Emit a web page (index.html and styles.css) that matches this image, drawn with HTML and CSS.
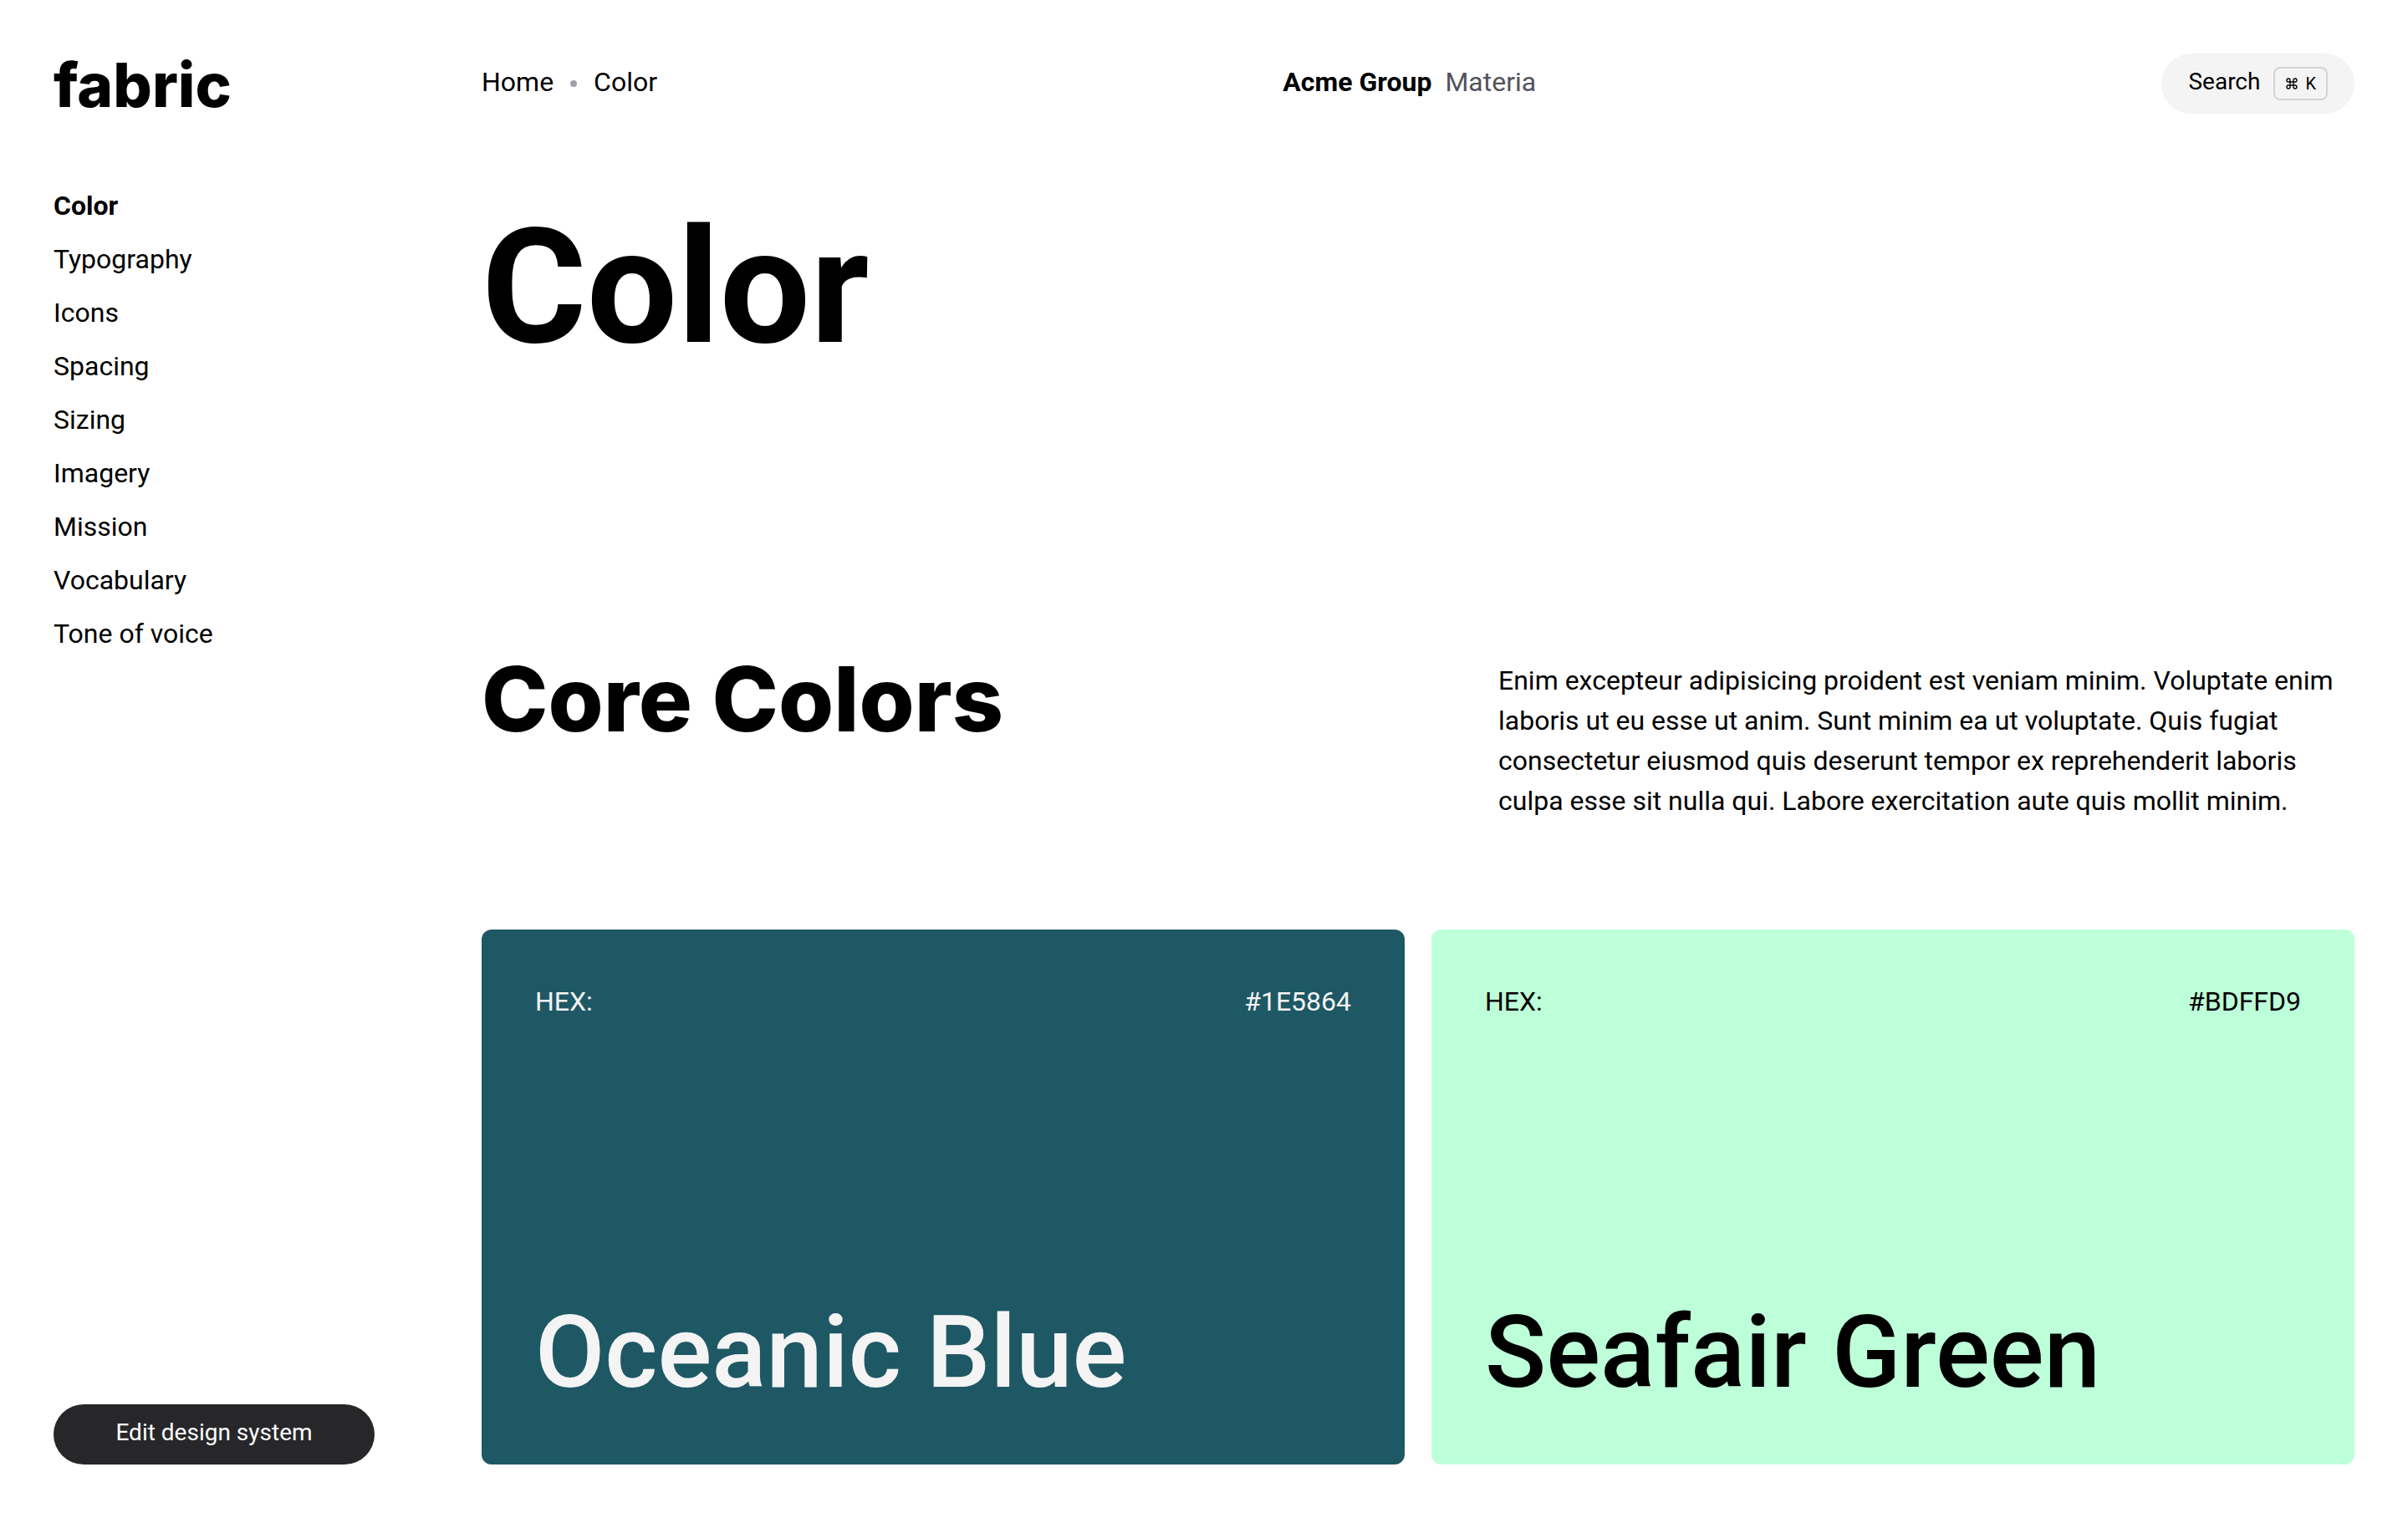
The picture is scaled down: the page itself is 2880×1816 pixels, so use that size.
FILE: index.html
```html
<!DOCTYPE html>
<html lang="en">
<head>
  <meta charset="utf-8">
  <meta name="viewport" content="width=device-width, initial-scale=1">
  <title>Color – Fabric</title>
  <link rel="stylesheet" href="styles.css">
</head>
<body>
  <div class="layout">
    <aside class="sidebar">
      <a class="logo" href="#">fabric</a>
      <nav class="nav" aria-label="Sections">
        <a class="nav-link nav-link-active" href="#" aria-current="page">Color</a>
        <a class="nav-link" href="#">Typography</a>
        <a class="nav-link" href="#">Icons</a>
        <a class="nav-link" href="#">Spacing</a>
        <a class="nav-link" href="#">Sizing</a>
        <a class="nav-link" href="#">Imagery</a>
        <a class="nav-link" href="#">Mission</a>
        <a class="nav-link" href="#">Vocabulary</a>
        <a class="nav-link" href="#">Tone of voice</a>
      </nav>
      <button class="edit-button" type="button">Edit design system</button>
    </aside>

    <main class="main">
      <header class="topbar">
        <nav class="breadcrumb" aria-label="Breadcrumb">
          <a href="#">Home</a>
          <span class="dot"></span>
          <a href="#">Color</a>
        </nav>
        <div class="workspace">
          <strong>Acme Group</strong>
          <span class="project">Materia</span>
        </div>
        <button class="search" type="button">
          <span class="search-label">Search</span>
          <kbd class="shortcut">
            <svg class="command-icon" viewBox="0 0 24 24" aria-hidden="true"><path d="M15 6v12a3 3 0 1 0 3-3H6a3 3 0 1 0 3 3V6a3 3 0 1 0-3 3h12a3 3 0 1 0-3-3"/></svg>
            <span>K</span>
          </kbd>
        </button>
      </header>

      <h1 class="page-title">Color</h1>

      <section class="section">
        <div class="section-head">
          <h2 class="section-title">Core Colors</h2>
          <p class="section-text">Enim excepteur adipisicing proident est veniam minim. Voluptate enim laboris ut eu esse ut anim. Sunt minim ea ut voluptate. Quis fugiat consectetur eiusmod quis deserunt tempor ex reprehenderit laboris culpa esse sit nulla qui. Labore exercitation aute quis mollit minim.</p>
        </div>
        <div class="swatches">
          <article class="swatch swatch-oceanic">
            <div class="swatch-row"><span>HEX:</span><span>#1E5864</span></div>
            <h3 class="swatch-name">Oceanic Blue</h3>
          </article>
          <article class="swatch swatch-seafair">
            <div class="swatch-row"><span>HEX:</span><span>#BDFFD9</span></div>
            <h3 class="swatch-name">Seafair Green</h3>
          </article>
        </div>
      </section>
    </main>
  </div>
</body>
</html>
```
FILE: styles.css
```css
* {
  box-sizing: border-box;
}

body {
  margin: 0;
  background: #fff;
  color: #000;
  font-family: Roboto, "Liberation Sans", sans-serif;
  font-size: 32px;
  line-height: 48px;
}

a {
  color: inherit;
  text-decoration: none;
}

h1,
h2,
h3,
p {
  margin: 0;
}

button {
  border: 0;
  font: inherit;
  font-size: 28px;
  cursor: pointer;
}

.layout {
  display: grid;
  grid-template-columns: 384px 1fr;
  gap: 128px;
  min-height: 100vh;
  padding: 64px;
}

/* Sidebar */

.sidebar {
  position: sticky;
  top: 64px;
  display: flex;
  flex-direction: column;
  height: calc(100vh - 128px);
}

.logo {
  font-family: Inter, sans-serif;
  font-size: 73px;
  font-weight: 800;
  line-height: 76px;
}

.nav {
  display: flex;
  flex-direction: column;
  gap: 16px;
  margin-top: 82px;
}

.nav-link-active {
  font-weight: 700;
}

.edit-button {
  height: 72px;
  margin-top: auto;
  padding: 0 32px 4px;
  border-radius: 36px;
  background: #27272a;
  color: #fff;
}

/* Top bar */

.topbar {
  display: flex;
  align-items: center;
  justify-content: space-between;
  height: 72px;
}

.breadcrumb,
.workspace {
  display: flex;
  align-items: center;
  padding-bottom: 4px;
}

.breadcrumb {
  gap: 20px;
}

.workspace {
  gap: 16px;
}

.dot {
  width: 8px;
  height: 8px;
  margin-top: 4px;
  border-radius: 50%;
  background: #a1a1aa;
}

.project {
  color: #52525b;
}

.search {
  display: flex;
  align-items: center;
  gap: 16px;
  height: 72px;
  padding: 0 32px;
  border-radius: 36px;
  background: #f4f4f4;
  color: #000;
}

.search-label {
  padding-bottom: 4px;
}

.shortcut {
  display: flex;
  align-items: center;
  gap: 8px;
  height: 40px;
  padding: 0 12px;
  border: 2px solid #d4d4d8;
  border-radius: 8px;
  font-family: inherit;
  font-size: 20px;
}

.command-icon {
  width: 16px;
  height: 16px;
  fill: none;
  stroke: currentColor;
  stroke-width: 2;
}

/* Content */

.page-title {
  margin-top: 112px;
  font-size: 192px;
  font-weight: 700;
  line-height: 192px;
}

.section {
  margin-top: 340px;
}

.section-head {
  display: grid;
  grid-template-columns: 1184fr 1024fr;
  gap: 32px;
}

.section-title {
  font-family: Inter, sans-serif;
  font-size: 107px;
  font-weight: 800;
  line-height: 112px;
}

.section-text {
  padding-top: 10px;
}

.swatches {
  display: grid;
  grid-template-columns: 1fr 1fr;
  gap: 32px;
  margin-top: 130px;
}

.swatch {
  display: flex;
  flex-direction: column;
  justify-content: space-between;
  min-height: 640px;
  padding: 62px 64px 74px;
  border-radius: 12px;
}

.swatch-oceanic {
  background: #1e5864;
  color: #f4f4f5;
}

.swatch-seafair {
  background: #bdffd9;
}

.swatch-row {
  display: flex;
  justify-content: space-between;
}

.swatch-name {
  font-size: 121px;
  font-weight: 500;
  line-height: 120px;
}
```
